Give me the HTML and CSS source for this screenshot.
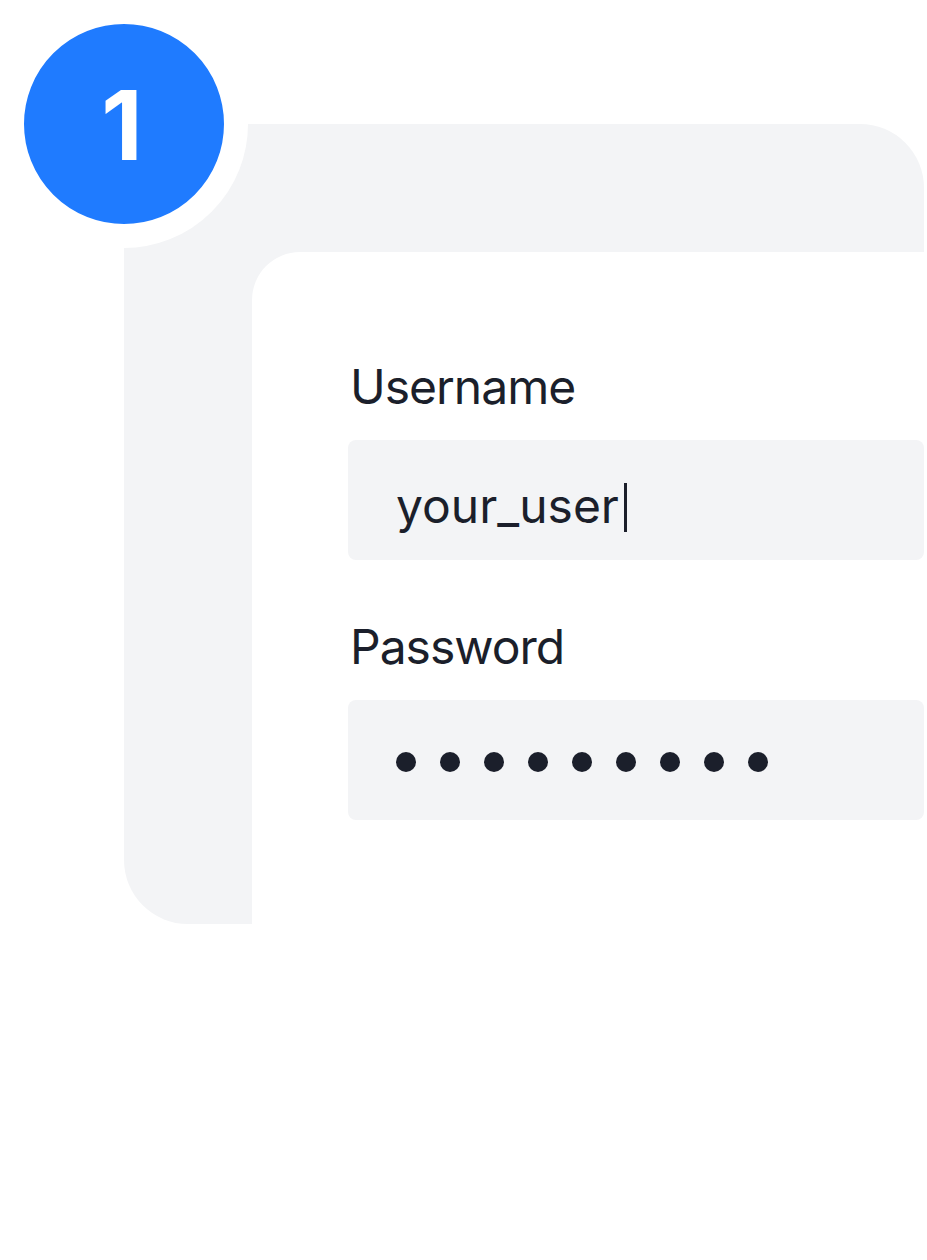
FILE: index.html
```html
<!DOCTYPE html>
<html lang="en">
<head>
<meta charset="utf-8">
<title>Step 1 - Sign in</title>
<link rel="stylesheet" href="styles.css">
</head>
<body>
<div class="stage">
  <div class="badge"><span class="badge-num">1</span></div>
  <div class="panel">
    <div class="card">
      <form class="form">
        <div class="label">Username</div>
        <div class="field field-text"><span class="value">your_user</span><span class="caret"></span></div>
        <div class="label label-gap">Password</div>
        <div class="field field-dots">
          <span class="dot"></span><span class="dot"></span><span class="dot"></span>
          <span class="dot"></span><span class="dot"></span><span class="dot"></span>
          <span class="dot"></span><span class="dot"></span><span class="dot"></span>
        </div>
      </form>
    </div>
  </div>
</div>
</body>
</html>
```
FILE: styles.css
```css
html, body {
  margin: 0;
  padding: 0;
  background: #ffffff;
}
body {
  width: 927px;
  height: 1260px;
  overflow: hidden;
  font-family: Inter, "Noto Sans", sans-serif;
  color: #1b1f2b;
}
.stage {
  position: relative;
  padding: 124px 0 0 124px;
}
.badge {
  position: absolute;
  left: 0;
  top: 0;
  width: 200px;
  height: 200px;
  border: 24px solid #ffffff;
  border-radius: 50%;
  background: #1f7bff;
  display: flex;
  align-items: center;
  justify-content: center;
  z-index: 2;
}
.badge-num {
  color: #ffffff;
  font-weight: 700;
  font-size: 96px;
  line-height: 1;
  margin-left: -4px;
  margin-top: 2px;
}
.panel {
  width: 800px;
  height: 800px;
  background: #f3f4f6;
  border-radius: 64px;
  padding: 128px 0 0 128px;
  box-sizing: border-box;
}
.card {
  width: 720px;
  height: 760px;
  background: #ffffff;
  border-top-left-radius: 48px;
  padding: 111px 0 0 96px;
  box-sizing: border-box;
}
.form {
  display: flex;
  flex-direction: column;
  margin: 0;
}
.label {
  font-size: 48px;
  line-height: 48px;
  font-weight: 400;
  letter-spacing: -1px;
  padding-left: 2px;
  margin-bottom: 29px;
}
.label-gap {
  margin-top: 63px;
}
.field {
  width: 576px;
  height: 120px;
  box-sizing: border-box;
  background: #f3f4f6;
  border-radius: 8px;
  padding-left: 48px;
}
.field-text {
  display: flex;
  align-items: flex-start;
  padding-top: 42px;
  font-size: 48px;
  line-height: 48px;
  font-weight: 400;
}
.caret {
  display: inline-block;
  width: 3px;
  height: 49px;
  background: #1b1f2b;
  margin-left: 5px;
  margin-top: 1px;
}
.field-dots {
  display: flex;
  align-items: center;
  gap: 24px;
  padding-top: 4px;
}
.dot {
  width: 20px;
  height: 20px;
  border-radius: 50%;
  background: #1b1f2b;
}
```
